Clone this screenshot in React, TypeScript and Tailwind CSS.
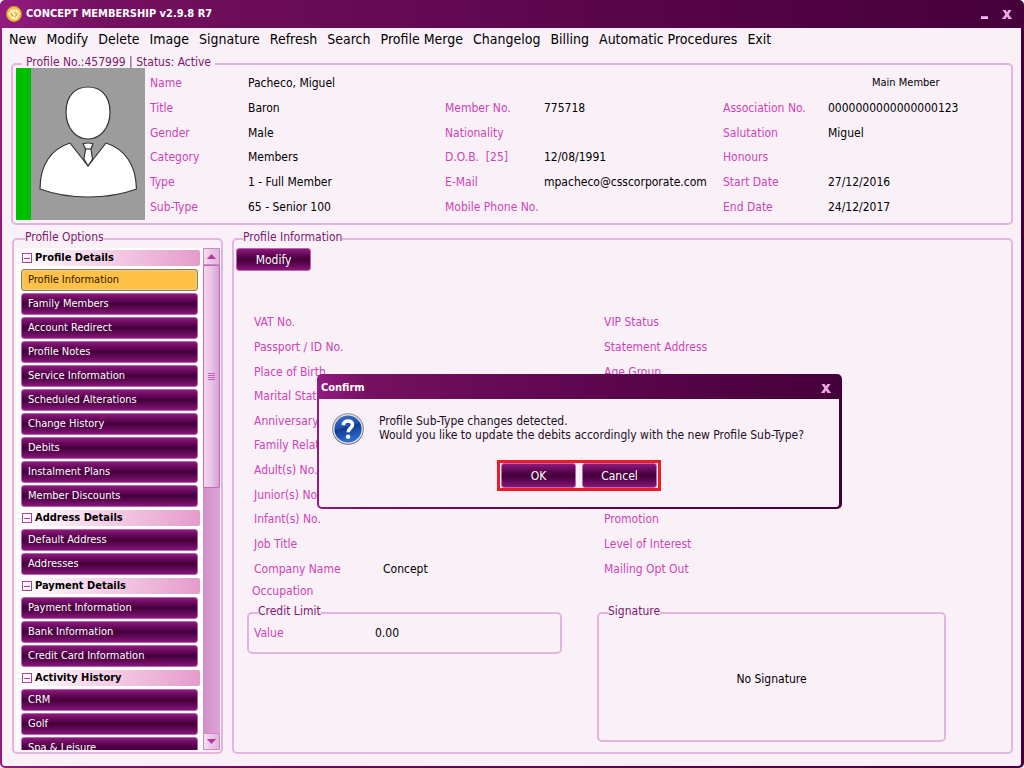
import { useId, type ReactNode } from "react";

const menuItems = [
  "New",
  "Modify",
  "Delete",
  "Image",
  "Signature",
  "Refresh",
  "Search",
  "Profile Merge",
  "Changelog",
  "Billing",
  "Automatic Procedures",
  "Exit",
];

const profileRows = [
  ["Name", "Pacheco, Miguel", "", "", "", "Main Member"],
  ["Title", "Baron", "Member No.", "775718", "Association No.", "0000000000000000123"],
  ["Gender", "Male", "Nationality", "", "Salutation", "Miguel"],
  ["Category", "Members", "D.O.B.\u00a0 [25]", "12/08/1991", "Honours", ""],
  ["Type", "1 - Full Member", "E-Mail", "mpacheco@csscorporate.com", "Start Date", "27/12/2016"],
  ["Sub-Type", "65 - Senior 100", "Mobile Phone No.", "", "End Date", "24/12/2017"],
];

const optionGroups = [
  {
    title: "Profile Details",
    items: [
      "Profile Information",
      "Family Members",
      "Account Redirect",
      "Profile Notes",
      "Service Information",
      "Scheduled Alterations",
      "Change History",
      "Debits",
      "Instalment Plans",
      "Member Discounts",
    ],
  },
  { title: "Address Details", items: ["Default Address", "Addresses"] },
  { title: "Payment Details", items: ["Payment Information", "Bank Information", "Credit Card Information"] },
  { title: "Activity History", items: ["CRM", "Golf", "Spa & Leisure"] },
];

const infoRows = [
  ["VAT No.", "", "VIP Status"],
  ["Passport / ID No.", "", "Statement Address"],
  ["Place of Birth", "", "Age Group"],
  ["Marital Status", "", ""],
  ["Anniversary", "", ""],
  ["Family Relation", "", ""],
  ["Adult(s) No.", "", ""],
  ["Junior(s) No.", "", ""],
  ["Infant(s) No.", "", "Promotion"],
  ["Job Title", "", "Level of Interest"],
  ["Company Name", "Concept", "Mailing Opt Out"],
];

function Panel({
  title,
  className = "",
  titleClass = "ml-[9px]",
  children,
}: {
  title: string;
  className?: string;
  titleClass?: string;
  children?: ReactNode;
}) {
  const id = useId();
  return (
    <section
      aria-labelledby={id}
      className={`flex flex-col rounded-[5px] border-2 border-[#e2b4de] ${className}`}
    >
      <h2
        id={id}
        className={`-mt-[10px] w-fit shrink-0 bg-[#faf0f8] text-[12px] leading-[14px] text-[#7b1a6d] ${titleClass}`}
      >
        {title}
      </h2>
      {children}
    </section>
  );
}

function PurpleButton({ children, className = "" }: { children: ReactNode; className?: string }) {
  return (
    <button
      type="button"
      className={`rounded-[3px] border border-[#bd62b4] bg-linear-to-b from-[#8d1a7c] via-[#43003a] to-[#861678] text-white ${className}`}
    >
      {children}
    </button>
  );
}

function Portrait() {
  return (
    <div className="flex h-[152px] w-[129px] shrink-0">
      <div className="w-[15px] bg-[#00bf00]" />
      <svg viewBox="0 0 114 152" className="flex-1 bg-[#9c9c9c]" aria-label="Member photo" role="img">
        <g fill="#fff" stroke="#333" strokeWidth="1.2" strokeLinejoin="round">
          <path d="M57 19C69 19 79 27 79 44C79 59 70 71 57 71C44 71 35 59 35 44C35 27 45 19 57 19Z" />
          <path d="M39 75C20 81 9 97 9 121C24 126.500 40 129 57 129C74 129 91 126.500 105.500 121C105 97 94 81 75 75L57 98Z" />
          <path d="M52 75.500Q57 74.500 62 75.500L60 81L61.500 91L57 98L53 91L54.500 81Z" />
          <path d="M54.500 81H60" />
        </g>
      </svg>
    </div>
  );
}

function Logo() {
  return (
    <svg viewBox="0 0 16 16" className="size-4" aria-hidden="true">
      <circle cx="8" cy="8" r="7.900" fill="#d8a01e" />
      <circle cx="8" cy="8" r="7" fill="#ecc24c" />
      <path d="M6 3.500L2.800 8L6.500 12.500L9 9.500L6.200 6.200L8.200 4L11 7.500" fill="none" stroke="#fff8dc" strokeWidth="1.300" />
      <path d="M10 3.500L13.200 8L10 12.500L7.500 12.500M9 9.500L7.200 7.600" fill="none" stroke="#fff8dc" strokeWidth="1.300" />
      <path d="M4.800 8L7 10.500M9 5.500L11.500 8L9 11" fill="none" stroke="#cf941b" strokeWidth="0.700" />
    </svg>
  );
}

function CloseIcon() {
  return (
    <svg viewBox="0 0 10 9" className="h-[9px] w-[10px]" aria-hidden="true">
      <path d="M0.500 0H3.700L5 2.300L6.300 0H9.500L6.700 4.300L9 7.800H9.800V9H6.500L5 6.400L3.500 9H0.200V7.800H1L3.300 4.300Z" fill="#f0a8e3" />
    </svg>
  );
}

function QuestionIcon() {
  return (
    <svg viewBox="0 0 32 32" className="size-8 shrink-0" aria-hidden="true">
      <defs>
        <linearGradient id="ball" x1="0" y1="0" x2="0.300" y2="1">
          <stop offset="0" stopColor="#3e73c8" />
          <stop offset="0.500" stopColor="#1d4eae" />
          <stop offset="0.520" stopColor="#10388f" />
          <stop offset="1" stopColor="#2c6ad0" />
        </linearGradient>
        <linearGradient id="rim" x1="0" y1="0" x2="0" y2="1">
          <stop offset="0" stopColor="#8b8f96" />
          <stop offset="1" stopColor="#6d7178" />
        </linearGradient>
      </defs>
      <circle cx="16" cy="16" r="15.800" fill="url(#rim)" />
      <circle cx="16" cy="16" r="14.800" fill="#e4e6e8" />
      <circle cx="16" cy="16" r="13.600" fill="url(#ball)" />
      <path d="M11.500 12.200C11.500 6.400 20.800 6.800 20.500 11.800C20.300 15.200 16.200 15.200 16.200 19.200" fill="none" stroke="#fff" strokeWidth="3.600" />
      <circle cx="16.100" cy="23.800" r="2.300" fill="#f0f1f4" />
    </svg>
  );
}

function ScrollBar() {
  const knob =
    "flex h-[17px] shrink-0 items-center justify-center border border-[#cf86c5] bg-linear-to-r from-[#f5def1] via-[#eac6e5] to-[#e3b4dd]";
  return (
    <div className="flex w-[17px] shrink-0 flex-col bg-linear-to-r from-[#d28fc8] to-[#dca6d6]">
      <button type="button" aria-label="Scroll up" className={knob}>
        <svg viewBox="0 0 9 5" className="h-[5px] w-[9px]"><path d="M0 5L4.500 0L9 5Z" fill="#b03a9e" /></svg>
      </button>
      <div className="flex h-[223px] flex-col items-center justify-center gap-px rounded-[2px] border border-[#c468b8] bg-linear-to-r from-[#f3d8ef] via-[#e8c3e4] to-[#d9a0d2]">
        <div className="h-px w-[7px] bg-[#c067b6]" />
        <div className="h-px w-[7px] bg-[#c067b6]" />
        <div className="h-px w-[7px] bg-[#c067b6]" />
        <div className="h-px w-[7px] bg-[#c067b6]" />
      </div>
      <div className="flex-1" />
      <button type="button" aria-label="Scroll down" className={knob}>
        <svg viewBox="0 0 9 5" className="h-[5px] w-[9px]"><path d="M0 0L4.500 5L9 0Z" fill="#b03a9e" /></svg>
      </button>
    </div>
  );
}

function OptionList() {
  return (
    <nav className="flex min-h-0 flex-1 flex-col gap-[3px] overflow-hidden bg-white pt-[2px] pr-[3px] pl-[5px]">
      {optionGroups.map((group) => (
        <div key={group.title} className="flex shrink-0 flex-col gap-[3px]">
          <button
            type="button"
            className="flex h-4 items-center gap-[3px] rounded-r-[2px] bg-linear-to-r from-white to-[#e59bcb] pl-px text-[11px] leading-[14px] font-bold text-black"
          >
            <span className="flex size-[10px] items-center justify-center border border-[#b540a4] bg-white">
              <span className="h-px w-[6px] bg-[#b540a4]" />
            </span>
            {group.title}
          </button>
          <div className="mr-[2px] flex flex-col gap-[2px]">
            {group.items.map((item) =>
              item === "Profile Information" ? (
                <button
                  key={item}
                  type="button"
                  aria-current="page"
                  className="h-[22px] rounded-[3px] border border-[#8c7c4d] bg-[#ffc148] pl-[6px] text-left text-[11px] text-[#2a1a00] inset-ring inset-ring-[#e9cf95]"
                >
                  {item}
                </button>
              ) : (
                <PurpleButton key={item} className="h-[22px] pl-[6px] text-left text-[11px]">
                  {item}
                </PurpleButton>
              ),
            )}
          </div>
        </div>
      ))}
    </nav>
  );
}

function ConfirmDialog() {
  return (
    <div
      role="dialog"
      aria-labelledby="confirm-title"
      className="absolute top-[374px] left-[317px] rounded-[5px] bg-linear-to-r from-[#921b80] via-[#741060] via-10% to-[#45003a] pr-[3px] pb-[2px] pl-[2px]"
    >
      <header className="flex h-[25px] items-center justify-between pt-[3px] pr-2 pl-[2px]">
        <h2 id="confirm-title" className="text-[11px] font-bold text-white">Confirm</h2>
        <button type="button" aria-label="Close dialog"><CloseIcon /></button>
      </header>
      <div className="flex flex-col items-center gap-[15px] rounded-b-[3px] bg-[#faf0f8] px-[13px] pt-[14px] pb-4">
        <div className="flex w-[494px] gap-[15px]">
          <QuestionIcon />
          <p className="pt-px text-[12px] leading-[14px] whitespace-nowrap text-[#1c0f24]">
            Profile Sub-Type changes detected.
            <br />
            Would you like to update the debits accordingly with the new Profile Sub-Type?
          </p>
        </div>
        <div className="flex gap-[6px] border-[3px] border-[#ed1c24] px-px">
          <PurpleButton className="h-[25px] w-[75px] text-[12px]">OK</PurpleButton>
          <PurpleButton className="h-[25px] w-[75px] text-[12px]">Cancel</PurpleButton>
        </div>
      </div>
    </div>
  );
}

export default function App() {
  return (
    <div className="relative flex h-screen flex-col rounded-[5px] bg-linear-to-r from-[#921b80] via-[#741060] via-10% to-[#45003a] pr-[3px] pb-[2px] pl-[2px] font-['DejaVu_Sans_Condensed','DejaVu_Sans',sans-serif] text-[12px]">
      <header className="flex h-7 shrink-0 items-center justify-between pr-[9px] pl-1">
        <div className="flex items-center gap-1">
          <Logo />
          <h1 className="text-[11px] font-bold text-white">CONCEPT MEMBERSHIP v2.9.8 R7</h1>
        </div>
        <div className="flex items-end gap-[14px]">
          <button type="button" aria-label="Minimize" className="h-[3px] w-[7px] bg-linear-to-b from-[#e777cf] to-[#fbe4f6]" />
          <button type="button" aria-label="Close"><CloseIcon /></button>
        </div>
      </header>

      <div className="flex min-h-0 flex-1 flex-col rounded-b-[3px] bg-[#faf0f8] pr-2 pb-3 pl-[9px]">
        <nav className="-ml-[2px] flex h-[22px] shrink-0 items-center gap-[10px] text-[14px] text-black">
          {menuItems.map((item) => (
            <button key={item} type="button" className="whitespace-nowrap">{item}</button>
          ))}
        </nav>

        <Panel title="Profile No.:457999 | Status: Active" titleClass="ml-[9px] px-1" className="mt-[13px] h-[162px] shrink-0">
          <div className="-mt-px flex gap-[5px] pl-[3px]">
            <Portrait />
            <dl className="mt-[3px] grid h-[148px] flex-1 grid-cols-[98px_197px_99px_179px_105px_1fr] grid-rows-6 items-center">
              {profileRows.flatMap((row, r) =>
                row.map((text, c) =>
                  c % 2 === 0 ? (
                    <dt key={`${r}-${c}`} className="whitespace-nowrap text-[#cc45b6]">{text}</dt>
                  ) : text === "Main Member" ? (
                    <dd key={`${r}-${c}`} className="pl-11 text-[11px] text-black">{text}</dd>
                  ) : (
                    <dd key={`${r}-${c}`} className="whitespace-nowrap text-black">{text}</dd>
                  ),
                ),
              )}
            </dl>
          </div>
        </Panel>

        <div className="mt-[13px] flex min-h-0 flex-1 gap-[9px]">
          <Panel title="Profile Options" className="ml-px w-[211px] shrink-0 pr-px pb-[2px] pl-[2px]">
            <div className="mt-1 flex min-h-0 flex-1">
              <OptionList />
              <ScrollBar />
            </div>
          </Panel>

          <Panel title="Profile Information" className="min-w-0 flex-1">
            <div className="mt-1 ml-[2px]">
              <PurpleButton className="h-[23px] w-[75px] text-[12px]">Modify</PurpleButton>
            </div>
            <dl className="mt-[39px] ml-5 grid h-[271px] shrink-0 grid-cols-[129px_221px_1fr] grid-rows-11 items-center">
              {infoRows.flatMap((row, r) =>
                row.map((text, c) =>
                  c === 1 ? (
                    <dd key={`${r}-${c}`} className="text-black">{text}</dd>
                  ) : (
                    <dt key={`${r}-${c}`} className="whitespace-nowrap text-[#cc45b6]">{text}</dt>
                  ),
                ),
              )}
            </dl>
            <p className="mt-[2px] ml-[18px] shrink-0 leading-4 text-[#cc45b6]">Occupation</p>
            <div className="mt-[13px] ml-[13px] flex items-start gap-[35px]">
              <Panel title="Credit Limit" className="h-[42px] w-[315px]">
                <dl className="mt-[7px] flex pl-[5px] leading-4">
                  <dt className="w-[121px] text-[#cc45b6]">Value</dt>
                  <dd className="text-black">0.00</dd>
                </dl>
              </Panel>
              <Panel title="Signature" className="h-[130px] w-[349px]">
                <p className="flex flex-1 items-center justify-center text-black">No Signature</p>
              </Panel>
            </div>
          </Panel>
        </div>
      </div>

      <ConfirmDialog />
    </div>
  );
}
